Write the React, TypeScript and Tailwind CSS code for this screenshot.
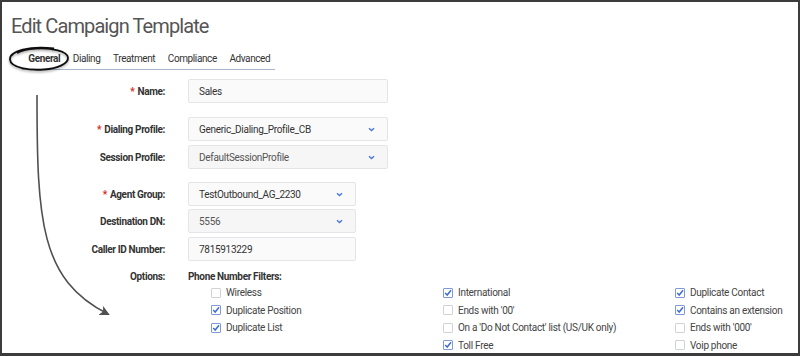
import React from 'react';

const font = { fontFamily: 'Roboto, "Open Sans", sans-serif' };

const tabs = ['General', 'Dialing', 'Treatment', 'Compliance', 'Advanced'];

const filters: [string, boolean][][] = [
  [
    ['Wireless', false],
    ['Duplicate Position', true],
    ['Duplicate List', true],
  ],
  [
    ['International', true],
    ["Ends with '00'", false],
    ["On a 'Do Not Contact' list (US/UK only)", false],
    ['Toll Free', true],
  ],
  [
    ['Duplicate Contact', true],
    ['Contains an extension', true],
    ["Ends with '000'", false],
    ['Voip phone', false],
  ],
];

const Chevron = () => (
  <svg width="7" height="5" viewBox="0 0 7 5" className="shrink-0">
    <path d="M1 1.2 L3.5 3.6 L6 1.2" fill="none" stroke="#4a78d6" strokeWidth="1.4" />
  </svg>
);

const Label = ({ text, req }: { text: string; req?: boolean }) => (
  <div className="w-[163px] shrink-0 text-right text-[10px] font-bold tracking-[-0.35px] text-[#333]">
    {req && <span className="mr-[3px] text-[#d8281c]">*</span>}
    {text}
  </div>
);

const Field = ({
  label,
  value,
  req,
  select,
  muted,
  width = 'w-[200px]',
  className = '',
}: {
  label: string;
  value: string;
  req?: boolean;
  select?: boolean;
  muted?: boolean;
  width?: string;
  className?: string;
}) => (
  <div className={`flex items-center gap-[23px] ${className}`}>
    <Label text={label} req={req} />
    <div
      className={`flex h-[24px] items-center justify-between rounded-[2px] border border-[#e3e5e8] pl-[10px] pr-[12px] text-[10px] tracking-[-0.3px] ${width} ${
        muted ? 'bg-[#f6f6f6] text-[#555]' : 'bg-[#fafafa] text-[#333]'
      }`}
    >
      <span>{value}</span>
      {select && <Chevron />}
    </div>
  </div>
);

const Check = ({ on }: { on: boolean }) => (
  <span
    className={`flex h-[10px] w-[10px] shrink-0 items-center justify-center rounded-[1px] border bg-white ${
      on ? 'border-[#7f9ad6]' : 'border-[#cfd2d6]'
    }`}
  >
    {on && (
      <svg width="8" height="8" viewBox="0 0 8 8">
        <path d="M1.2 4 L3.2 6 L7 1.2" fill="none" stroke="#3b6fd6" strokeWidth="1.5" />
      </svg>
    )}
  </span>
);

export default function App() {
  return (
    <div
      style={font}
      className="relative h-[356px] w-[800px] overflow-hidden border-2 border-b-[3px] border-[#3c3c3c] bg-white"
    >
      <h1 className="ml-[9px] mt-[12px] text-[20px] leading-[24px] tracking-[-0.9px] text-[#555]">
        Edit Campaign Template
      </h1>

      {/* tabs */}
      <div className="ml-[20px] mt-[14px] flex w-[253px] border-b border-[#a9b7cc]">
        {tabs.map((t, i) => (
          <div
            key={t}
            className={`px-[6.3px] pb-[3px] text-[10px] leading-[14px] tracking-[-0.4px] ${
              i === 0 ? 'font-bold text-[#333]' : 'text-[#333]'
            }`}
          >
            {t}
          </div>
        ))}
      </div>

      {/* form */}
      <div className="mt-[9px] flex flex-col">
        <Field label="Name:" value="Sales" req />
        <Field label="Dialing Profile:" value="Generic_Dialing_Profile_CB" req select className="mt-[14px]" />
        <Field label="Session Profile:" value="DefaultSessionProfile" select muted className="mt-[4px]" />
        <Field label="Agent Group:" value="TestOutbound_AG_2230" req select width="w-[168px]" className="mt-[13px]" />
        <Field label="Destination DN:" value="5556" select muted width="w-[168px]" className="mt-[3px]" />
        <Field label="Caller ID Number:" value="7815913229" width="w-[168px]" className="mt-[4px]" />

        <div className="mt-[8px] flex items-center gap-[23px] leading-[15px]">
          <Label text="Options:" />
          <div className="text-[10px] font-bold tracking-[-0.35px] text-[#333]">Phone Number Filters:</div>
        </div>

        <div className="ml-[209px] grid grid-cols-[232px_232px_1fr]">
          {filters.map((col, ci) => (
            <div key={ci} className="flex flex-col">
              {col.map(([txt, on]) => (
                <div key={txt} className="flex h-[17.5px] items-center gap-[5px] text-[10px] tracking-[-0.3px] text-[#444]">
                  <Check on={on} />
                  <span>{txt}</span>
                </div>
              ))}
            </div>
          ))}
        </div>
      </div>

      {/* annotation: ellipse around General and arrow */}
      <svg className="pointer-events-none absolute left-[-2px] top-[-2px]" width="800" height="356">
        <defs>
          <filter id="sh" x="-20%" y="-50%" width="140%" height="200%">
            <feDropShadow dx="0" dy="1.5" stdDeviation="1" floodColor="#000" floodOpacity="0.35" />
          </filter>
          <marker id="ah" markerWidth="10" markerHeight="10" refX="8" refY="5" orient="auto" markerUnits="userSpaceOnUse">
            <path d="M0 0 L10 5 L0 10 L2.5 5 Z" fill="#505050" />
          </marker>
        </defs>
        <path
          d="M54 48.5 C 30 45.5, 9.5 51, 10 59.5 C 10.5 68, 30 70.5, 44 69.5 C 58 68.5, 68.5 63.5, 68 57.5 C 67.5 51.5, 52 47.5, 36 48.5 C 28 49, 20 51, 17 53"
          fill="none"
          stroke="#111"
          strokeWidth="1.8"
          filter="url(#sh)"
        />
        <path
          d="M37 95 C 37 220, 40 280, 108 314"
          fill="none"
          stroke="#505050"
          strokeWidth="1.6"
          markerEnd="url(#ah)"
        />
      </svg>
    </div>
  );
}
